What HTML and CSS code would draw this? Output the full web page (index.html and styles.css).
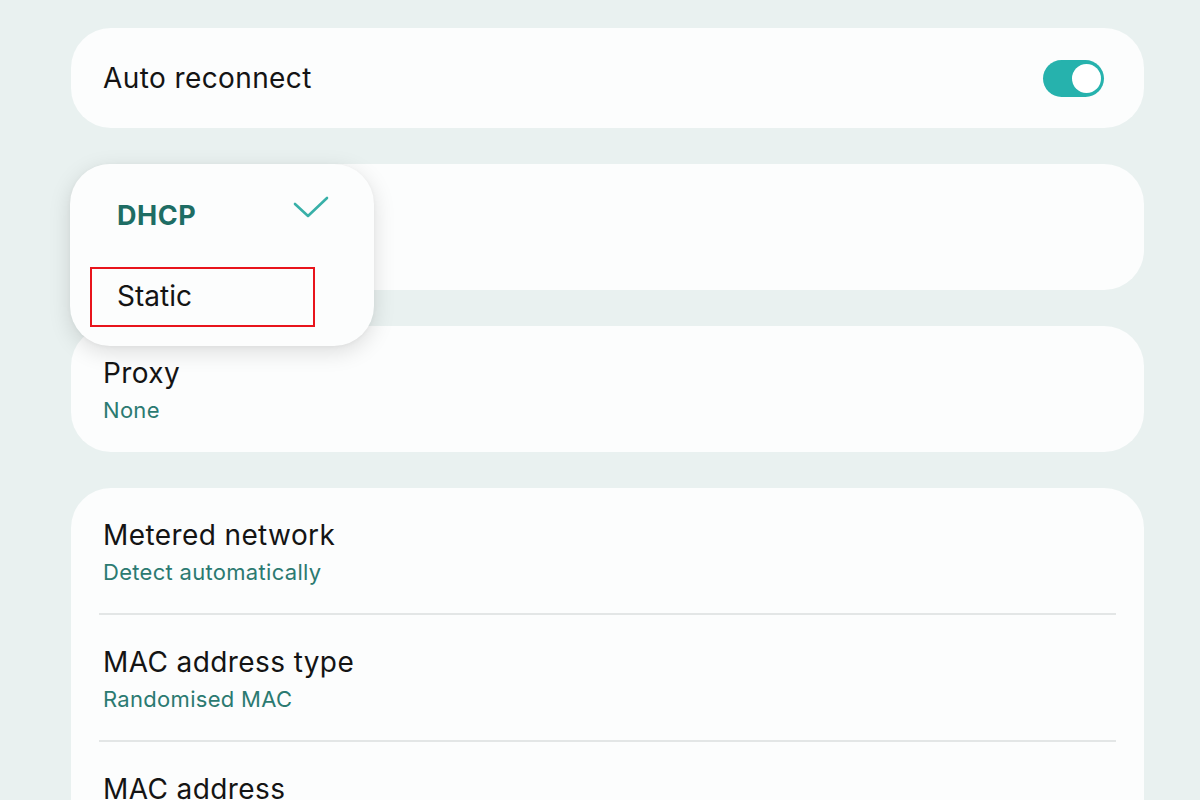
FILE: index.html
```html
<!DOCTYPE html>
<html lang="en">
<head>
<meta charset="utf-8">
<title>Wi-Fi settings</title>
<link rel="stylesheet" href="styles.css">
</head>
<body>
<div class="page">
  <section class="card card-single">
    <span class="title">Auto reconnect</span>
    <span class="toggle"><span class="knob"></span></span>
  </section>

  <section class="card card-item"></section>

  <section class="card card-item">
    <div class="title">Proxy</div>
    <div class="sub">None</div>
  </section>

  <section class="card card-list">
    <div class="row">
      <div class="title">Metered network</div>
      <div class="sub">Detect automatically</div>
    </div>
    <div class="row">
      <div class="title">MAC address type</div>
      <div class="sub">Randomised MAC</div>
    </div>
    <div class="row">
      <div class="title">MAC address</div>
    </div>
  </section>

  <div class="menu">
    <div class="menu-item selected">
      <span>DHCP</span>
      <svg class="check" width="36" height="24" viewBox="0 0 36 24"><path d="M2 8 L15 20 L34 2" fill="none" stroke="#38b0a8" stroke-width="2.6" stroke-linecap="round" stroke-linejoin="round"/></svg>
    </div>
    <div class="menu-item">
      <span>Static</span>
      <span class="highlight"></span>
    </div>
  </div>
</div>
</body>
</html>
```

FILE: styles.css
```css
html, body {
  margin: 0;
  padding: 0;
}
body {
  background: #e9f1f0;
  font-family: Inter, Roboto, "Noto Sans", sans-serif;
  color: #141414;
  width: 1200px;
  height: 800px;
  overflow: hidden;
}
.page {
  position: relative;
  padding: 28px 56px 0 71px;
  display: flex;
  flex-direction: column;
  gap: 36px;
}
.card {
  background: #fcfdfd;
  border-radius: 40px;
}
.card-single {
  height: 100px;
  padding: 0 40px 0 32px;
  display: flex;
  align-items: center;
  justify-content: space-between;
  box-sizing: border-box;
}
.title {
  font-size: 28px;
  line-height: 36px;
  letter-spacing: 0.4px;
  color: #141414;
}
.sub {
  font-size: 22px;
  line-height: 30px;
  letter-spacing: 0.3px;
  margin-top: 4px;
  color: #2b7a71;
}
.card-item {
  height: 126px;
  box-sizing: border-box;
  padding: 29px 32px 0;
}
.card-list {
  padding: 0 28px;
  height: 340px;
  border-radius: 40px 40px 0 0;
}
.row {
  padding: 29px 4px 26px;
  border-bottom: 2px solid #e3e6e6;
}
.row:last-child {
  border-bottom: none;
}
.toggle {
  position: relative;
  width: 61px;
  height: 37px;
  border-radius: 19px;
  background: #26b2ad;
  display: flex;
  align-items: center;
  justify-content: flex-end;
  padding: 0 3px;
  box-sizing: border-box;
}
.knob {
  width: 29px;
  height: 29px;
  border-radius: 50%;
  background: #ffffff;
}
.menu {
  position: absolute;
  left: 70px;
  top: 164px;
  width: 304px;
  height: 182px;
  box-sizing: border-box;
  padding: 10px 0;
  background: #fcfdfd;
  border-radius: 40px;
  box-shadow: 0 6px 22px rgba(0, 0, 0, 0.13), 0 1px 4px rgba(0, 0, 0, 0.04);
}
.menu-item {
  position: relative;
  height: 81px;
  padding: 0 47px;
  display: flex;
  align-items: center;
  justify-content: space-between;
  font-size: 28px;
  letter-spacing: 0;
  color: #141414;
}
.menu-item.selected {
  font-weight: 700;
  font-size: 27px;
  letter-spacing: 0.5px;
  color: #1e6d64;
}
.menu-item.selected span {
  position: relative;
  top: 1px;
}
.check {
  display: block;
  margin-top: -13px;
  margin-right: -2px;
}
.highlight {
  position: absolute;
  left: 20px;
  top: 12px;
  width: 225px;
  height: 60px;
  box-sizing: border-box;
  border: 2px solid #e8141c;
}
```
